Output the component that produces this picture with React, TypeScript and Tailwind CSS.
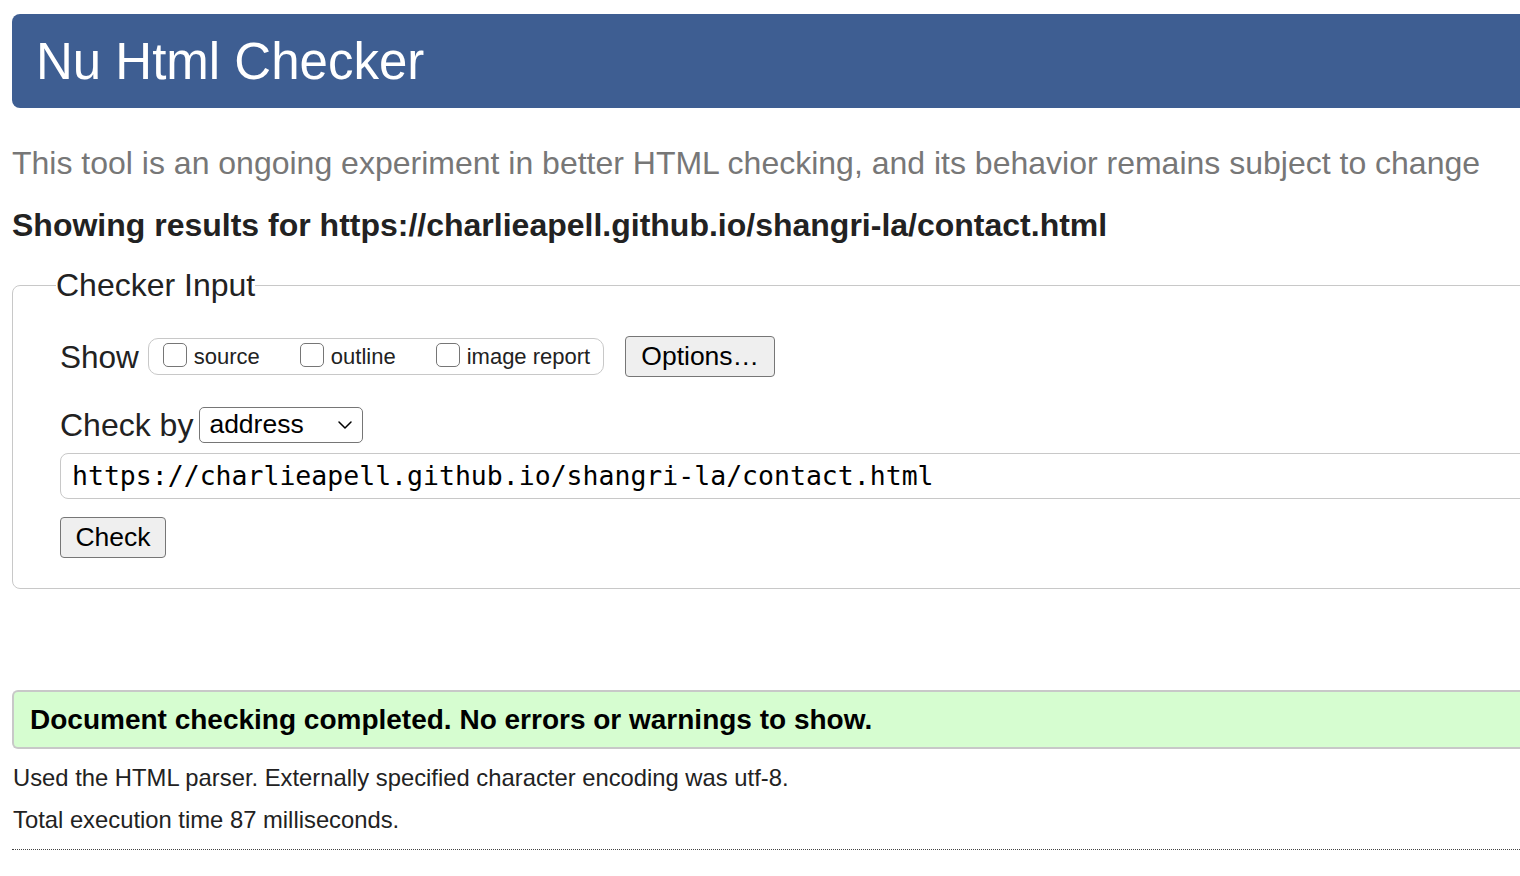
import { ChevronDown } from 'lucide-react';

const sans = { fontFamily: '"Liberation Sans", Arial, sans-serif' };

function Box({ label }: { label: string }) {
  return (
    <label className="flex items-end gap-[7px]">
      <span className="mb-[5px] h-[24px] w-[24px] rounded-[5px] border-[1.5px] border-[#767676] bg-white" />
      <span className="text-[22px] leading-[30px] text-[#222]">{label}</span>
    </label>
  );
}

export default function App() {
  return (
    <div className="h-[876px] w-[1520px] overflow-hidden bg-white text-[#222]" style={sans}>
      <div className="ml-[12px] mt-[14px] flex h-[94px] items-center rounded-l-[8px] bg-[#3e5e92] pl-[24px]">
        <h1 className="text-[51px] leading-none text-white">Nu Html Checker</h1>
      </div>

      <p className="ml-[12px] mt-[35px] h-[40px] text-[32px] leading-[40px] whitespace-nowrap text-[#777]">
        This tool is an ongoing experiment in better HTML checking, and its behavior remains subject to change
      </p>

      <p className="ml-[12px] mt-[22px] h-[40px] text-[32px] font-bold leading-[40px] whitespace-nowrap">
        Showing results for https://charlieapell.github.io/shangri-la/contact.html
      </p>

      <fieldset className="ml-[12px] mt-[22px] w-[1560px] rounded-[8px] border-[1.5px] border-[#c8c8c8] pb-[30px] pl-[43px]">
        <legend className="text-[32px] leading-[36px]">Checker Input</legend>

        <div className="ml-[4px] mt-[33px] flex items-center">
          <span className="text-[31.5px] leading-[40px]">Show</span>
          <div className="ml-[9px] flex h-[37px] items-center gap-[40px] rounded-[10px] border-[1.5px] border-[#c8c8c8] pl-[14px] pr-[13px]">
            <Box label="source" />
            <Box label="outline" />
            <Box label="image report" />
          </div>
          <button className="ml-[21px] h-[41px] w-[150px] rounded-[4px] border-[1.5px] border-[#767676] bg-[#efefef] text-[26.5px] text-black">
            Options…
          </button>
        </div>

        <div className="ml-[4px] mt-[28px] flex items-center">
          <span className="text-[32px] leading-[40px]">Check by</span>
          <div className="ml-[6px] flex h-[36px] w-[164px] items-center justify-between rounded-[5px] border-[1.5px] border-[#767676] pl-[9px] pr-[5px]">
            <span className="text-[26.5px] text-black">address</span>
            <ChevronDown size={24} strokeWidth={1.5} className="text-black" />
          </div>
        </div>

        <div className="ml-[4px] mt-[8px] flex h-[46px] items-center rounded-[8px] border-[1.5px] border-[#c8c8c8] pl-[11px]">
          <span
            className="text-[26.5px] text-black whitespace-nowrap"
            style={{ fontFamily: '"DejaVu Sans Mono", "Liberation Mono", monospace' }}
          >
            https://charlieapell.github.io/shangri-la/contact.html
          </span>
        </div>

        <button className="ml-[4px] mt-[18px] block h-[41px] w-[106px] rounded-[4px] border-[1.5px] border-[#767676] bg-[#efefef] text-[26.5px] text-black">
          Check
        </button>
      </fieldset>

      <div className="ml-[12px] mt-[101px] flex h-[59px] items-center rounded-l-[6px] border-2 border-r-0 border-[#c8c8c8] bg-[#d6fdd0] pl-[16px]">
        <span className="text-[28px] font-bold text-black">
          Document checking completed. No errors or warnings to show.
        </span>
      </div>

      <p className="ml-[13px] mt-[14px] text-[23.8px] leading-[30px]">
        Used the HTML parser. Externally specified character encoding was utf-8.
      </p>
      <p className="ml-[13px] mt-[12px] text-[23.8px] leading-[30px]">Total execution time 87 milliseconds.</p>

      <div className="ml-[12px] mt-[14px] border-t-[1.5px] border-dotted border-[#444]" />
    </div>
  );
}
